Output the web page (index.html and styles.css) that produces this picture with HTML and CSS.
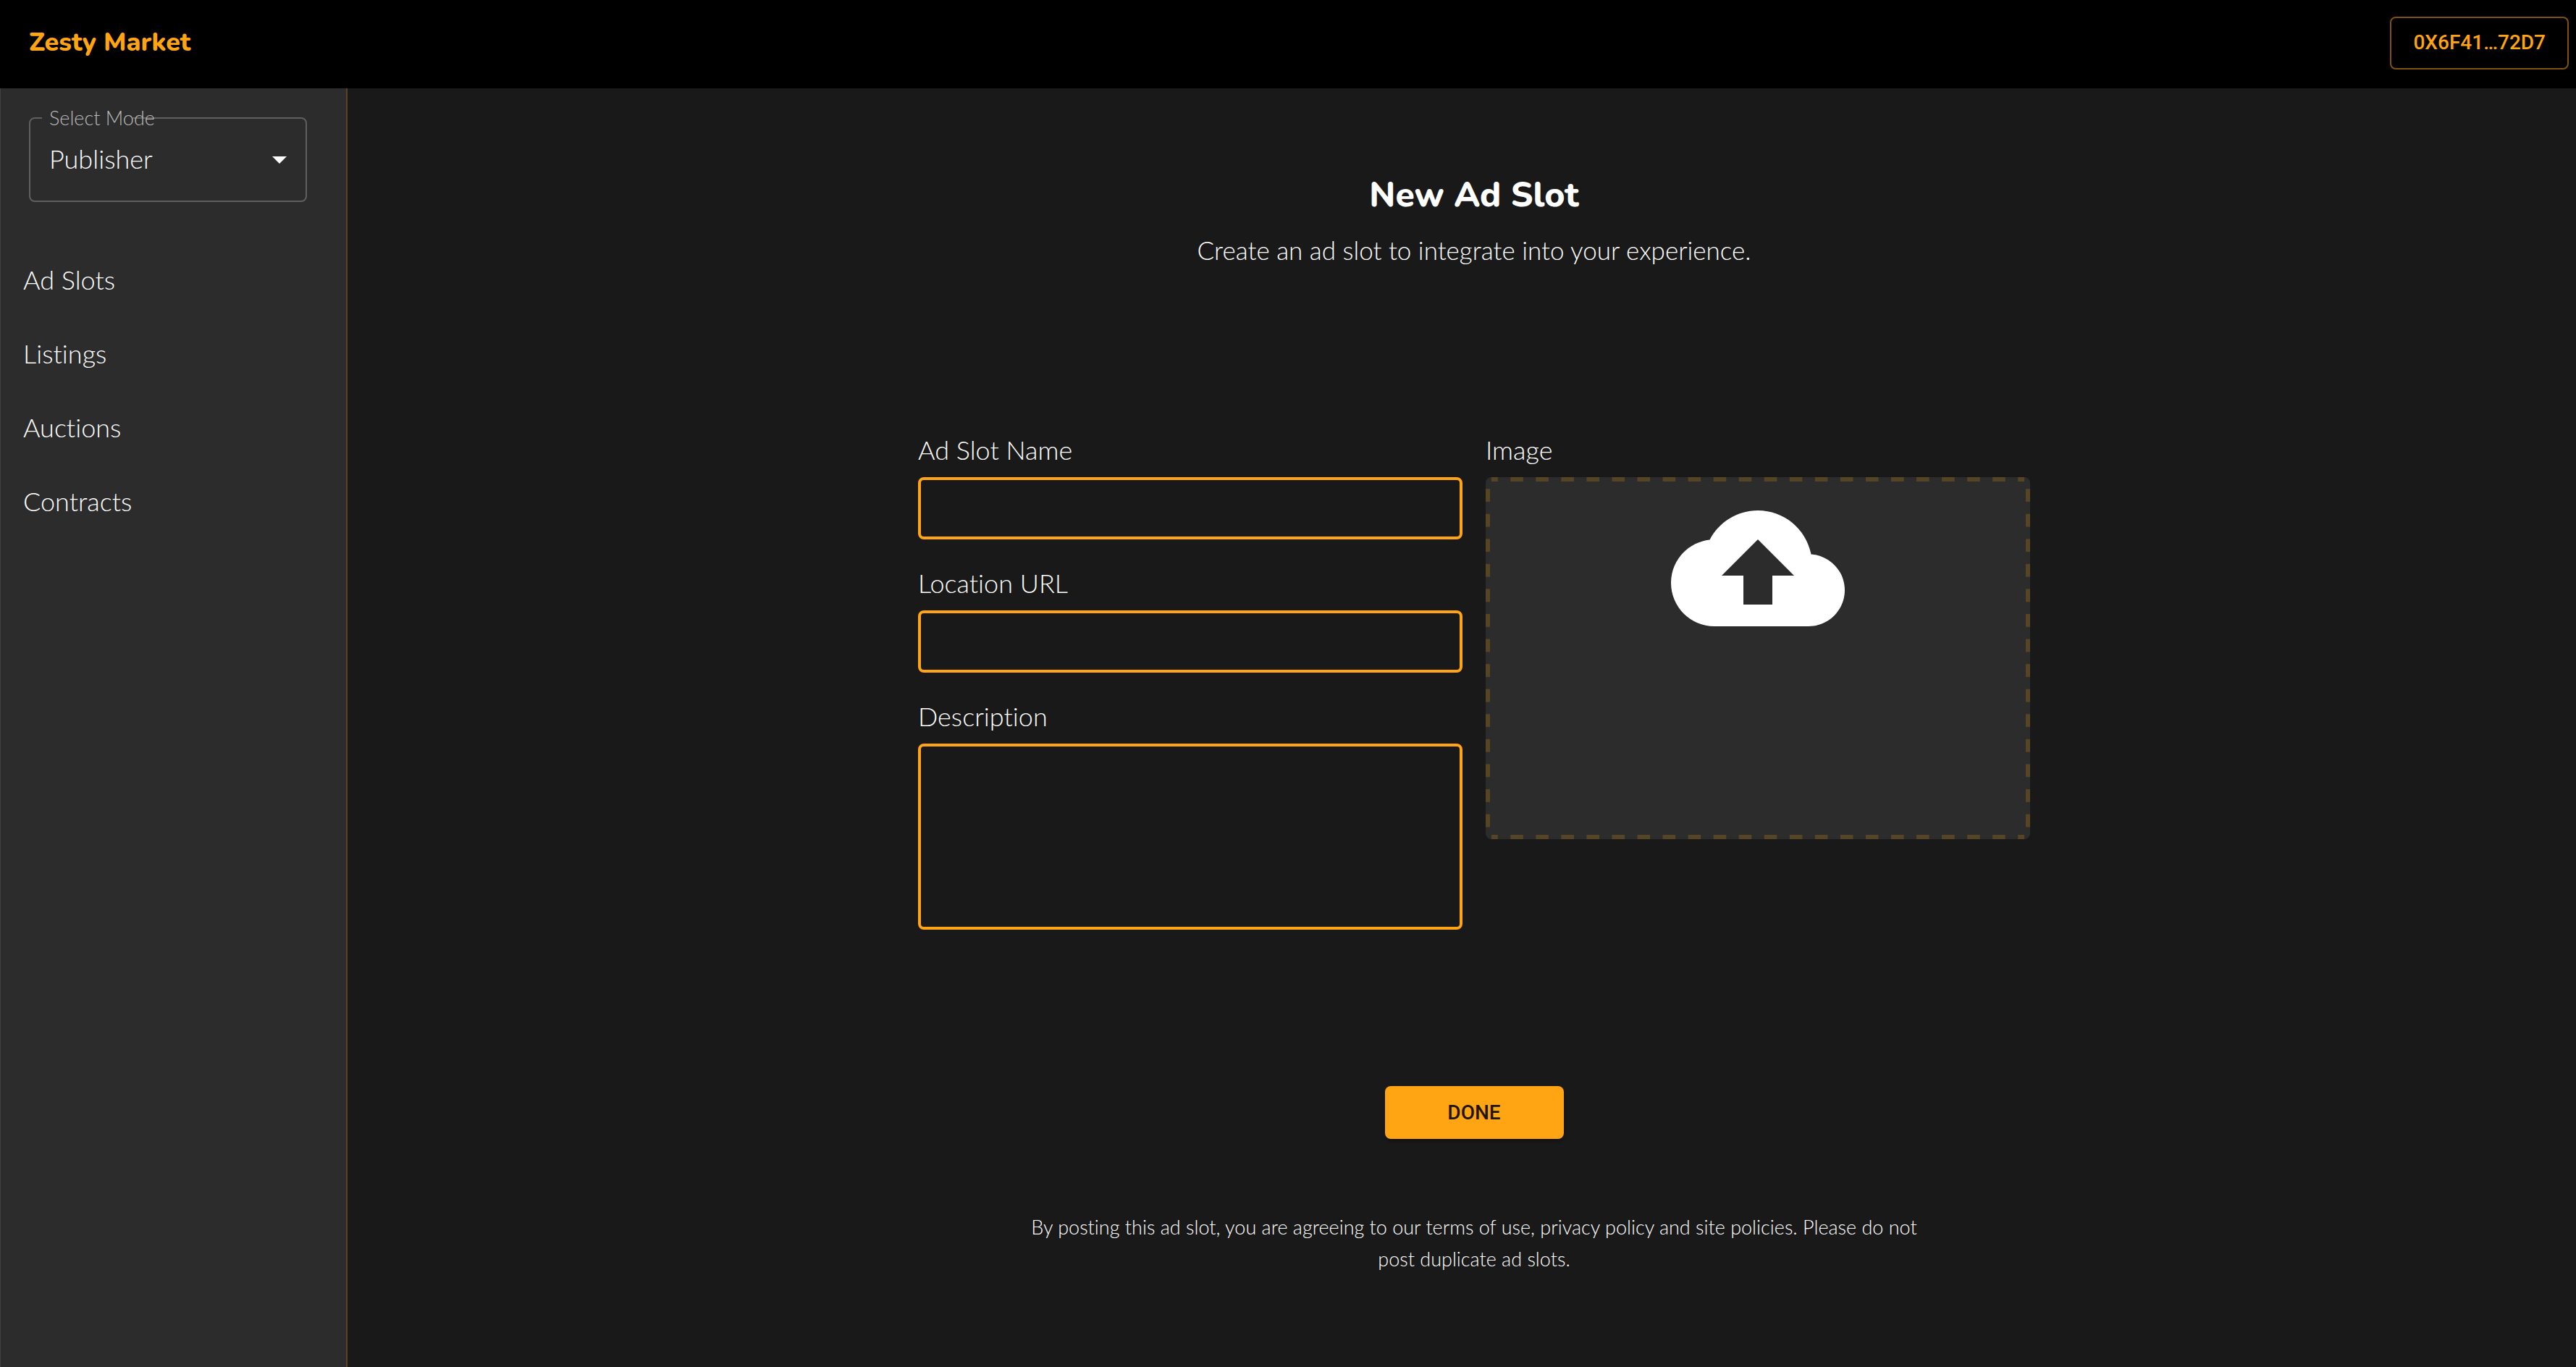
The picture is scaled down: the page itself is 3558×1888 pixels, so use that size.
FILE: index.html
```html
<!DOCTYPE html>
<html lang="en">
<head>
<meta charset="utf-8">
<meta name="viewport" content="width=device-width, initial-scale=1">
<title>Zesty Market</title>
<link rel="stylesheet" href="styles.css">
</head>
<body>
<header class="topbar">
  <a class="brand" href="#">Zesty Market</a>
  <button class="btn btn-outlined" type="button">0X6F41…72D7</button>
</header>
<div class="layout">
  <aside class="sidebar">
    <fieldset class="mode">
      <legend class="mode-legend"><label for="mode">Select Mode</label></legend>
      <select class="mode-select" id="mode">
        <option>Publisher</option>
        <option>Advertiser</option>
      </select>
      <svg class="mode-arrow" viewBox="0 0 24 24" aria-hidden="true"><path d="M7 10l5 5 5-5z"/></svg>
    </fieldset>
    <nav class="menu">
      <a class="menu-link" href="#">Ad Slots</a>
      <a class="menu-link" href="#">Listings</a>
      <a class="menu-link" href="#">Auctions</a>
      <a class="menu-link" href="#">Contracts</a>
    </nav>
  </aside>
  <main class="content">
    <form class="slot-form">
      <h1 class="title">New Ad Slot</h1>
      <p class="subtitle">Create an ad slot to integrate into your experience.</p>
      <div class="columns">
        <div class="column">
          <div class="field">
            <label class="label" for="name">Ad Slot Name</label>
            <input class="control" id="name" type="text">
          </div>
          <div class="field">
            <label class="label" for="url">Location URL</label>
            <input class="control" id="url" type="url">
          </div>
          <div class="field">
            <label class="label" for="description">Description</label>
            <textarea class="control control-area" id="description"></textarea>
          </div>
        </div>
        <div class="column">
          <div class="field">
            <label class="label" for="image">Image</label>
            <label class="dropzone">
              <input class="file" id="image" type="file" accept="image/*">
              <svg class="cloud" viewBox="0 0 24 24" aria-hidden="true"><path d="M19.35 10.04C18.67 6.59 15.64 4 12 4 9.11 4 6.6 5.64 5.35 8.04 2.34 8.36 0 10.91 0 14c0 3.31 2.69 6 6 6h13c2.76 0 5-2.24 5-5 0-2.64-2.05-4.78-4.65-4.96zM14 13v4h-4v-4H7l5-5 5 5h-3z"/></svg>
            </label>
          </div>
        </div>
      </div>
      <button class="btn btn-filled" type="button">DONE</button>
      <p class="terms">By posting this ad slot, you are agreeing to our terms of use, privacy policy and site policies. Please do not post duplicate ad slots.</p>
    </form>
  </main>
</div>
</body>
</html>
```
FILE: styles.css
```css
:root {
  --accent: #ffa412;
  --accent-dim: #564525;
  --page: #191919;
  --panel: #2c2c2c;
  --text: "Lato", sans-serif;
  --display: "Nunito", "Open Sans", sans-serif;
}

* {
  box-sizing: border-box;
}

body {
  margin: 0;
  min-height: 100vh;
  display: flex;
  flex-direction: column;
  background: var(--page);
  color: #fff;
  font: 300 36px/44px var(--text);
  font-variant-ligatures: none;
}

.topbar {
  height: 122px;
  padding: 0 10px 4px 40px;
  display: flex;
  align-items: center;
  justify-content: space-between;
  background: #000;
}

.brand {
  color: var(--accent);
  font: 800 36px/48px var(--display);
  text-decoration: none;
}

.btn {
  height: 73px;
  border-radius: 8px;
  font: 500 28px/48px "Roboto", sans-serif;
}

.btn-outlined {
  padding: 0 30px;
  border: 2px solid #805209;
  background: none;
  color: var(--accent);
}

.btn-filled {
  width: 247px;
  border: 0;
  background: var(--accent);
  color: #211502;
  box-shadow: 0 6px 4px -4px #0003, 0 4px 4px #0002;
}

.layout {
  flex: 1;
  display: flex;
}

.sidebar {
  flex: none;
  width: 480px;
  padding-top: 24px;
  border-left: 1px solid #404040;
  border-right: 2px solid var(--accent-dim);
  background: var(--panel);
}

.mode {
  position: relative;
  margin: 0 54px 0 39px;
  padding: 0 16px;
  border: 2px solid #5f5f5f;
  border-radius: 8px;
}

.mode-legend {
  width: 125px;
  padding: 0 0 0 10px;
  color: #b9b9b9;
  font-size: 27px;
  line-height: 34px;
  white-space: nowrap;
}

.mode-legend label {
  position: relative;
}

.mode-select {
  display: block;
  width: 100%;
  height: 97px;
  padding: 0 10px 20px;
  border: 0;
  appearance: none;
  background: none;
  color: inherit;
  font: inherit;
}

.mode-arrow {
  position: absolute;
  right: 12px;
  bottom: 33px;
  width: 48px;
  height: 48px;
  fill: #fff;
  pointer-events: none;
}

.menu {
  margin-top: 56px;
  display: flex;
  flex-direction: column;
}

.menu-link {
  padding: 0 31px;
  line-height: 102px;
  color: inherit;
  text-decoration: none;
}

.content {
  flex: 1;
  padding: 113px 0 64px 34px;
}

.slot-form {
  max-width: 1536px;
  margin: 0 auto;
  display: flex;
  flex-direction: column;
  align-items: center;
}

.title {
  margin: 0;
  font: 800 48px/68px var(--display);
}

.subtitle {
  margin: 20px 0 0;
  font-size: 35px;
}

.columns {
  align-self: stretch;
  margin: 232px 0 216px;
  display: grid;
  grid-template-columns: 1fr 1fr;
  gap: 32px;
}

.column {
  display: flex;
  flex-direction: column;
  gap: 38px;
}

.field {
  display: flex;
  flex-direction: column;
  gap: 16px;
}

.control {
  width: 100%;
  height: 86px;
  padding: 0 24px;
  border: 4px solid var(--accent);
  border-radius: 8px;
  background: none;
  color: inherit;
  font: inherit;
}

.control-area {
  height: 257px;
  padding: 16px 24px;
  resize: none;
}

.dropzone {
  position: relative;
  height: 500px;
  padding-top: 6px;
  border-radius: 8px;
  overflow: hidden;
  display: flex;
  justify-content: center;
  background: var(--panel);
}

/* Dashed outline: one pair of horizontal strips, one pair of vertical ones. */
.dropzone::before,
.dropzone::after {
  content: "";
  position: absolute;
}

.dropzone::before {
  --dash: linear-gradient(90deg, var(--accent-dim) 26%, transparent 26% 74%, var(--accent-dim) 74%);
  inset: 0 8px;
  background:
    var(--dash) top / 35px 6px round no-repeat,
    var(--dash) bottom / 35px 6px round no-repeat;
}

.dropzone::after {
  --dash: linear-gradient(var(--accent-dim) 26%, transparent 26% 74%, var(--accent-dim) 74%);
  inset: 8px 0;
  background:
    var(--dash) left / 6px 35px no-repeat round,
    var(--dash) right / 6px 35px no-repeat round;
}

.file {
  position: absolute;
  opacity: 0;
  width: 1px;
  height: 1px;
}

.cloud {
  width: 240px;
  height: 240px;
  fill: #fff;
}

.terms {
  width: 82%;
  margin: 100px 0 0;
  font-size: 27px;
  text-align: center;
}
```
